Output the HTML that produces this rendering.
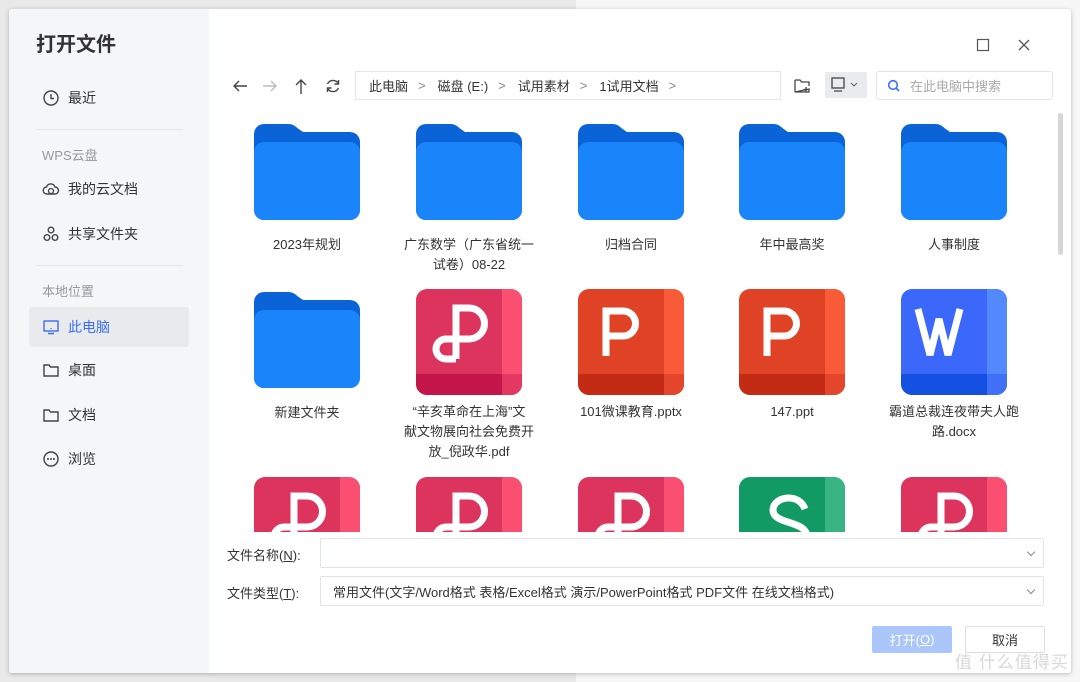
<!DOCTYPE html>
<html><head><meta charset="utf-8"><style>
*{margin:0;padding:0;box-sizing:border-box}
body{width:1080px;height:682px;overflow:hidden;position:relative;background:#e9e9e9;font-family:"Liberation Sans","Noto Sans CJK SC",sans-serif;color:#333}
.rbg{position:absolute;left:576px;top:0;width:504px;height:682px;background:#f7f7f7}
.win{position:absolute;left:9px;top:9px;width:1062px;height:664px;background:#fff;border-radius:3px;box-shadow:0 1px 5px rgba(0,0,0,.25);overflow:hidden}
.side{position:absolute;left:0;top:0;width:200px;height:664px;background:#f5f6f8}
.title{position:absolute;left:27px;top:19px;font-size:20px;font-weight:bold;color:#333}
.it{position:absolute;left:20px;width:160px;height:40px;font-size:14px;color:#333;display:flex;align-items:center;padding-left:13px}
.it svg{margin-right:8px}
.sec{position:absolute;left:33px;font-size:13px;color:#999}
.hr{position:absolute;left:27px;width:147px;height:1px;background:#e6e7ea}
.abs{position:absolute}
.crumb{position:absolute;left:346px;top:62px;width:426px;height:29px;border:1px solid #e5e6e8;font-size:13px;color:#333;display:flex;align-items:center;padding-left:13px}
.crumb span{margin-right:10px}
.crumb .g{color:#888;margin-right:12px}
.search{position:absolute;left:867px;top:62px;width:177px;height:29px;border:1px solid #e3e4e6;border-radius:3px;font-size:13px;color:#aaa;display:flex;align-items:center;padding-left:10px}
.cell{position:absolute;width:150px;text-align:center;font-size:13px;line-height:20px;color:#333}
.cell svg{display:block;margin:0 auto 7px}
.cell.f svg{margin-bottom:15px}
.lbl{position:absolute;font-size:13px;color:#333}
.inp{position:absolute;left:311px;width:724px;height:30px;border:1px solid #e3e4e6;border-radius:2px;font-size:13px;display:flex;align-items:center;padding-left:12px}
.inp:after{content:"";position:absolute;right:9px;top:10px;width:5px;height:5px;border-right:1px solid #888;border-bottom:1px solid #888;transform:rotate(45deg)}
.btn{position:absolute;top:617px;width:80px;height:27px;border-radius:2px;font-size:13px;display:flex;align-items:center;justify-content:center}
</style></head><body>
<div class="rbg"></div>
<div class="win">
<div class="side">
<div class="title">打开文件</div>
<div class="it" style="top:69px"><svg width="18" height="18" viewBox="0 0 18 18"><circle cx="9" cy="9" r="7" fill="none" stroke="#444" stroke-width="1.4"/><path d="M9 5v4.5h3" fill="none" stroke="#444" stroke-width="1.4"/></svg>最近</div>
<div class="hr" style="top:120px"></div>
<div class="sec" style="top:136px">WPS云盘</div>
<div class="it" style="top:160px"><svg width="18" height="18" viewBox="0 0 18 18"><path d="M5 14a3.5 3.5 0 0 1-.5-7A4.5 4.5 0 0 1 13 7a3.5 3.5 0 0 1 0 7z" fill="none" stroke="#444" stroke-width="1.4"/><circle cx="9" cy="11" r="2.5" fill="none" stroke="#444" stroke-width="1.3"/></svg>我的云文档</div>
<div class="it" style="top:205px"><svg width="18" height="18" viewBox="0 0 18 18"><g fill="none" stroke="#444" stroke-width="1.4"><circle cx="9" cy="5" r="2.8"/><circle cx="5" cy="12.5" r="2.8"/><circle cx="13" cy="12.5" r="2.8"/></g></svg>共享文件夹</div>
<div class="hr" style="top:256px"></div>
<div class="sec" style="top:272px">本地位置</div>
<div class="it" style="top:298px;background:#e8eaee;border-radius:3px;color:#3d6ef5"><svg width="18" height="18" viewBox="0 0 18 18"><rect x="2" y="3" width="14" height="10" fill="none" stroke="#3d6ef5" stroke-width="1.4"/><path d="M6 15.5h6M9 10v1" stroke="#3d6ef5" stroke-width="1.4"/></svg>此电脑</div>
<div class="it" style="top:341px"><svg width="18" height="18" viewBox="0 0 18 18"><path d="M2 4h5l1.5 2H16v9H2z" fill="none" stroke="#444" stroke-width="1.4"/></svg>桌面</div>
<div class="it" style="top:386px"><svg width="18" height="18" viewBox="0 0 18 18"><path d="M2 4h5l1.5 2H16v9H2z" fill="none" stroke="#444" stroke-width="1.4"/></svg>文档</div>
<div class="it" style="top:430px"><svg width="18" height="18" viewBox="0 0 18 18"><circle cx="9" cy="9" r="7" fill="none" stroke="#444" stroke-width="1.4"/><circle cx="6" cy="9" r="1" fill="#444"/><circle cx="9" cy="9" r="1" fill="#444"/><circle cx="12" cy="9" r="1" fill="#444"/></svg>浏览</div>
</div>

<svg class="abs" style="left:967px;top:29px" width="14" height="14"><rect x="1.5" y="1.5" width="11" height="11" fill="none" stroke="#555" stroke-width="1.2"/></svg>
<svg class="abs" style="left:1008px;top:29px" width="14" height="14"><path d="M2 2l10 10M12 2L2 12" stroke="#555" stroke-width="1.3"/></svg>

<svg class="abs" style="left:222px;top:68px" width="18" height="18"><path d="M16 9H3M8 4L3 9l5 5" fill="none" stroke="#444" stroke-width="1.4"/></svg>
<svg class="abs" style="left:252px;top:68px" width="18" height="18"><path d="M2 9h13M10 4l5 5-5 5" fill="none" stroke="#bbb" stroke-width="1.4"/></svg>
<svg class="abs" style="left:283px;top:68px" width="18" height="18"><path d="M9 17V3M4 8l5-5 5 5" fill="none" stroke="#444" stroke-width="1.4"/></svg>
<svg class="abs" style="left:315px;top:68px" width="18" height="18"><path d="M14.5 7A6 6 0 0 0 3.5 7M3.5 11a6 6 0 0 0 11 0" fill="none" stroke="#444" stroke-width="1.4"/><path d="M14.5 3v4h-4M3.5 15v-4h4" fill="none" stroke="#444" stroke-width="1.4"/></svg>
<div class="crumb"><span>此电脑</span><span class="g">&gt;</span><span>磁盘 (E:)</span><span class="g">&gt;</span><span>试用素材</span><span class="g">&gt;</span><span>1试用文档</span><span class="g">&gt;</span></div>
<svg class="abs" style="left:784px;top:68px" width="18" height="18"><path d="M2 3h5l1.5 2H16v4M16 12v3H2z M2 3v12" fill="none" stroke="#444" stroke-width="1.3"/><path d="M13 10v5M10.5 12.5h5" stroke="#444" stroke-width="1.3"/></svg>
<div class="abs" style="left:816px;top:63px;width:42px;height:26px;background:#e9ebef;border-radius:2px"></div>
<svg class="abs" style="left:822px;top:68px" width="34" height="16"><rect x="1" y="1" width="12" height="10" fill="none" stroke="#444" stroke-width="1.3"/><path d="M3 14h8" stroke="#444" stroke-width="1.3"/><path d="M20 6l3 3 3-3" fill="none" stroke="#666" stroke-width="1.1"/></svg>
<div class="search"><svg width="14" height="14" style="margin-right:9px"><circle cx="6" cy="6" r="4.3" fill="none" stroke="#3d6ef5" stroke-width="1.6"/><path d="M9 9l3 3" stroke="#3d6ef5" stroke-width="1.6"/></svg>在此电脑中搜索</div>

<div class="abs" style="left:1049px;top:104px;width:5px;height:142px;background:#d6d6d6;border-radius:3px"></div>

<div class="abs" style="left:200px;top:100px;width:850px;height:423px;overflow:hidden">
<div class="cell f" style="left:23px;top:15px"><svg width="106" height="96" viewBox="0 0 106 96"><path d="M10 0h24c5 0 7 2 10 4.5L49 8h47a10 10 0 0 1 10 10v68a10 10 0 0 1-10 10H10A10 10 0 0 1 0 86V10A10 10 0 0 1 10 0z" fill="#0b63d8"/><rect x="0" y="18" width="106" height="78" rx="10" fill="#1a84fb"/></svg>2023年规划</div>
<div class="cell f" style="left:185px;top:15px"><svg width="106" height="96" viewBox="0 0 106 96"><path d="M10 0h24c5 0 7 2 10 4.5L49 8h47a10 10 0 0 1 10 10v68a10 10 0 0 1-10 10H10A10 10 0 0 1 0 86V10A10 10 0 0 1 10 0z" fill="#0b63d8"/><rect x="0" y="18" width="106" height="78" rx="10" fill="#1a84fb"/></svg>广东数学（广东省统一<br>试卷）08-22</div>
<div class="cell f" style="left:347px;top:15px"><svg width="106" height="96" viewBox="0 0 106 96"><path d="M10 0h24c5 0 7 2 10 4.5L49 8h47a10 10 0 0 1 10 10v68a10 10 0 0 1-10 10H10A10 10 0 0 1 0 86V10A10 10 0 0 1 10 0z" fill="#0b63d8"/><rect x="0" y="18" width="106" height="78" rx="10" fill="#1a84fb"/></svg>归档合同</div>
<div class="cell f" style="left:508px;top:15px"><svg width="106" height="96" viewBox="0 0 106 96"><path d="M10 0h24c5 0 7 2 10 4.5L49 8h47a10 10 0 0 1 10 10v68a10 10 0 0 1-10 10H10A10 10 0 0 1 0 86V10A10 10 0 0 1 10 0z" fill="#0b63d8"/><rect x="0" y="18" width="106" height="78" rx="10" fill="#1a84fb"/></svg>年中最高奖</div>
<div class="cell f" style="left:670px;top:15px"><svg width="106" height="96" viewBox="0 0 106 96"><path d="M10 0h24c5 0 7 2 10 4.5L49 8h47a10 10 0 0 1 10 10v68a10 10 0 0 1-10 10H10A10 10 0 0 1 0 86V10A10 10 0 0 1 10 0z" fill="#0b63d8"/><rect x="0" y="18" width="106" height="78" rx="10" fill="#1a84fb"/></svg>人事制度</div>
<div class="cell f" style="left:23px;top:183px"><svg width="106" height="96" viewBox="0 0 106 96"><path d="M10 0h24c5 0 7 2 10 4.5L49 8h47a10 10 0 0 1 10 10v68a10 10 0 0 1-10 10H10A10 10 0 0 1 0 86V10A10 10 0 0 1 10 0z" fill="#0b63d8"/><rect x="0" y="18" width="106" height="78" rx="10" fill="#1a84fb"/></svg>新建文件夹</div>
<div class="cell" style="left:185px;top:180px"><svg width="106" height="106" viewBox="0 0 106 106"><defs><clipPath id="c1"><rect width="106" height="106" rx="11"/></clipPath></defs><g clip-path="url(#c1)"><rect width="106" height="106" fill="#dd345e"/><rect x="86" width="20" height="106" fill="#fb4f72"/><rect y="85" width="106" height="21" fill="#c4154a"/><rect x="86" y="85" width="20" height="21" fill="#e33862"/></g><path d="M40 70V19h13a15.5 15.5 0 0 1 0 31H40M40 50H30a10 10 0 0 0 0 20h10" fill="none" stroke="#fff" stroke-width="7"/></svg>“辛亥革命在上海”文<br>献文物展向社会免费开<br>放_倪政华.pdf</div>
<div class="cell" style="left:347px;top:180px"><svg width="106" height="106" viewBox="0 0 106 106"><defs><clipPath id="c2"><rect width="106" height="106" rx="11"/></clipPath></defs><g clip-path="url(#c2)"><rect width="106" height="106" fill="#e04226"/><rect x="86" width="20" height="106" fill="#f95a37"/><rect y="85" width="106" height="21" fill="#c42b14"/><rect x="86" y="85" width="20" height="21" fill="#e3462a"/></g><path d="M28 67V22h17a12.5 12.5 0 0 1 0 25H28" fill="none" stroke="#fff" stroke-width="7"/></svg>101微课教育.pptx</div>
<div class="cell" style="left:508px;top:180px"><svg width="106" height="106" viewBox="0 0 106 106"><defs><clipPath id="c3"><rect width="106" height="106" rx="11"/></clipPath></defs><g clip-path="url(#c3)"><rect width="106" height="106" fill="#e04226"/><rect x="86" width="20" height="106" fill="#f95a37"/><rect y="85" width="106" height="21" fill="#c42b14"/><rect x="86" y="85" width="20" height="21" fill="#e3462a"/></g><path d="M28 67V22h17a12.5 12.5 0 0 1 0 25H28" fill="none" stroke="#fff" stroke-width="7"/></svg>147.ppt</div>
<div class="cell" style="left:670px;top:180px"><svg width="106" height="106" viewBox="0 0 106 106"><defs><clipPath id="c4"><rect width="106" height="106" rx="11"/></clipPath></defs><g clip-path="url(#c4)"><rect width="106" height="106" fill="#3b67fa"/><rect x="86" width="20" height="106" fill="#5389fe"/><rect y="85" width="106" height="21" fill="#1451e3"/><rect x="86" y="85" width="20" height="21" fill="#4070f8"/></g><path d="M17 20l12 46 9-36 9 36 12-46" fill="none" stroke="#fff" stroke-width="7"/></svg>霸道总裁连夜带夫人跑<br>路.docx</div>
<div class="cell" style="left:23px;top:368px"><svg width="106" height="106" viewBox="0 0 106 106"><defs><clipPath id="c5"><rect width="106" height="106" rx="11"/></clipPath></defs><g clip-path="url(#c5)"><rect width="106" height="106" fill="#dd345e"/><rect x="86" width="20" height="106" fill="#fb4f72"/></g><path d="M40 70V19h13a15.5 15.5 0 0 1 0 31H40M40 50H30a10 10 0 0 0 0 20h10" fill="none" stroke="#fff" stroke-width="7"/></svg></div>
<div class="cell" style="left:185px;top:368px"><svg width="106" height="106" viewBox="0 0 106 106"><defs><clipPath id="c6"><rect width="106" height="106" rx="11"/></clipPath></defs><g clip-path="url(#c6)"><rect width="106" height="106" fill="#dd345e"/><rect x="86" width="20" height="106" fill="#fb4f72"/></g><path d="M40 70V19h13a15.5 15.5 0 0 1 0 31H40M40 50H30a10 10 0 0 0 0 20h10" fill="none" stroke="#fff" stroke-width="7"/></svg></div>
<div class="cell" style="left:347px;top:368px"><svg width="106" height="106" viewBox="0 0 106 106"><defs><clipPath id="c7"><rect width="106" height="106" rx="11"/></clipPath></defs><g clip-path="url(#c7)"><rect width="106" height="106" fill="#dd345e"/><rect x="86" width="20" height="106" fill="#fb4f72"/></g><path d="M40 70V19h13a15.5 15.5 0 0 1 0 31H40M40 50H30a10 10 0 0 0 0 20h10" fill="none" stroke="#fff" stroke-width="7"/></svg></div>
<div class="cell" style="left:508px;top:368px"><svg width="106" height="106" viewBox="0 0 106 106"><defs><clipPath id="c8"><rect width="106" height="106" rx="11"/></clipPath></defs><g clip-path="url(#c8)"><rect width="106" height="106" fill="#129a64"/><rect x="86" width="20" height="106" fill="#38b382"/></g><path d="M66 32c-3-8-10-11-16-11-10 0-16 6-16 12 0 15 34 10 34 27 0 7-7 12-17 12-8 0-15-4-18-11" fill="none" stroke="#fff" stroke-width="7"/></svg></div>
<div class="cell" style="left:670px;top:368px"><svg width="106" height="106" viewBox="0 0 106 106"><defs><clipPath id="c9"><rect width="106" height="106" rx="11"/></clipPath></defs><g clip-path="url(#c9)"><rect width="106" height="106" fill="#dd345e"/><rect x="86" width="20" height="106" fill="#fb4f72"/></g><path d="M40 70V19h13a15.5 15.5 0 0 1 0 31H40M40 50H30a10 10 0 0 0 0 20h10" fill="none" stroke="#fff" stroke-width="7"/></svg></div>
</div>

<div class="lbl" style="left:218px;top:536px">文件名称(<u>N</u>):</div>
<div class="inp" style="top:529px"></div>
<div class="lbl" style="left:218px;top:574px">文件类型(<u>T</u>):</div>
<div class="inp" style="top:567px">常用文件(文字/Word格式 表格/Excel格式 演示/PowerPoint格式 PDF文件 在线文档格式)</div>
<div class="btn" style="left:863px;background:#abc6fb;color:#fff">打开(<u>O</u>)</div>
<div class="btn" style="left:956px;border:1px solid #dcdde0;color:#333">取消</div>
</div>
<div class="abs" style="left:955px;top:648px;font-size:17px;color:#d8d8d8;letter-spacing:1px">值 什么值得买</div>
</body></html>
